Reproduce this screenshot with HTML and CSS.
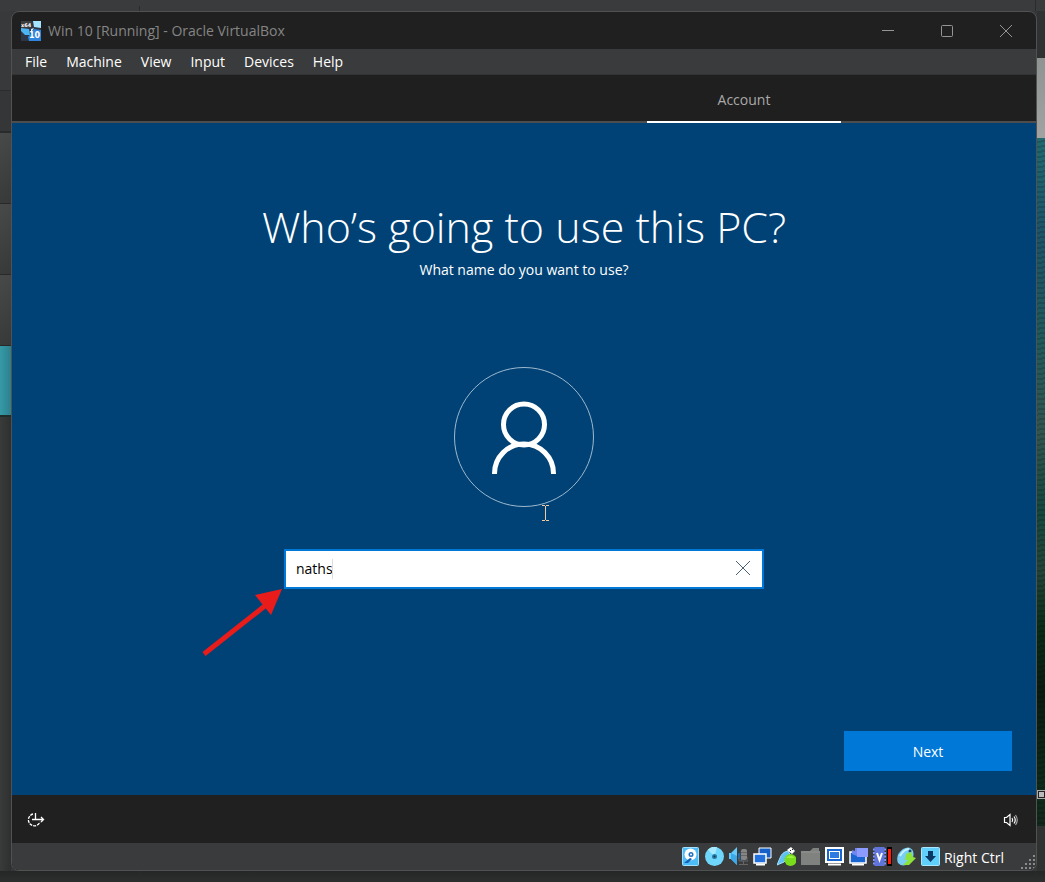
FILE: index.html
```html
<!DOCTYPE html>
<html lang="en">
<head>
<meta charset="utf-8">
<title>Win 10 [Running] - Oracle VirtualBox</title>
<link rel="stylesheet" href="styles.css">
</head>
<body class="desktop">
<div class="backdrop-edge backdrop-top"></div>
<div class="machine-list">
  <div class="machine-tools"></div>
  <div class="machine-header"></div>
  <div class="machine-row"></div>
  <div class="machine-row"></div>
  <div class="machine-row"></div>
  <div class="machine-row machine-selected"></div>
</div>
<main class="window">
  <header class="titlebar">
    <svg class="app-icon" viewBox="0 0 20 20" aria-hidden="true">
      <rect width="20" height="20" fill="#2d3548"/>
      <path d="M0 7L8 8L9 14L4 14L0 10Z" fill="#4db4f4"/>
      <path d="M12 0H20V7L13 6Z" fill="#a5e4ff"/>
      <path d="M13 8L20 9V20H8L7 16Z" fill="#2e86dc"/>
      <path d="M10 8L13 7L10 12Z" fill="#d9f4ff"/>
      <rect width="10" height="7" fill="#3d3d3d"/>
      <text x="0" y="6" class="app-icon-arch">x64</text>
      <text x="8" y="17" class="app-icon-version">10</text>
    </svg>
    <h1 class="window-title">Win 10 [Running] - Oracle VirtualBox</h1>
    <div class="window-controls">
      <button class="window-button" aria-label="Minimize"><svg width="12" height="12" viewBox="0 0 12 12"><path d="M0 5.5H12"/></svg></button>
      <button class="window-button" aria-label="Maximize"><svg width="12" height="12" viewBox="0 0 12 12"><rect x=".5" y=".5" width="11" height="11" rx="1"/></svg></button>
      <button class="window-button" aria-label="Close"><svg width="12" height="12" viewBox="0 0 12 12"><path d="M0 0L12 12M12 0L0 12"/></svg></button>
    </div>
  </header>
  <nav class="menubar">
    <button class="menu">File</button>
    <button class="menu">Machine</button>
    <button class="menu">View</button>
    <button class="menu">Input</button>
    <button class="menu">Devices</button>
    <button class="menu">Help</button>
  </nav>
  <div class="steps"><div class="step">Account</div></div>
  <form class="setup">
    <h2 class="question">Who’s going to use this PC?</h2>
    <label class="prompt" for="name">What name do you want to use?</label>
    <div class="avatar">
      <svg width="140" height="140" viewBox="0 0 140 140" fill="none" stroke="#fff" aria-hidden="true">
        <circle cx="70" cy="70" r="69.5" stroke="#9db9cf"/>
        <circle cx="70" cy="57.5" r="20.5" stroke-width="5"/>
        <path d="M40.500 107V106.500A29.500 29.500 0 0 1 99.500 106.500V107" stroke-width="5"/>
      </svg>
      <svg class="pointer" width="7" height="16" viewBox="0 0 7 16" fill="none" stroke="#f5c9a0" aria-hidden="true"><path d="M0 .5H3M4 .5H7M3.500 1V15M0 15.500H3M4 15.500H7"/></svg>
    </div>
    <div class="field">
      <input class="field-input" id="name" type="text" value="naths">
      <span class="caret"></span>
      <button class="field-clear" type="button" aria-label="Clear"><svg width="14" height="14" viewBox="0 0 14 14"><path d="M0 0L14 14M14 0L0 14"/></svg></button>
      <svg class="callout" width="84" height="72" viewBox="0 0 84 72" aria-hidden="true"><path d="M2 67L64 18" stroke="#e91c1c" stroke-width="5"/><path d="M80 2L53 8L69 28Z" fill="#e91c1c"/></svg>
    </div>
    <button class="next" type="button">Next</button>
  </form>
  <div class="guest-bar">
    <button class="guest-button" aria-label="Ease of access"><svg width="18" height="16" viewBox="0 0 18 16" fill="none" stroke="#fff" stroke-width="1.300"><path d="M6 2A6 6 0 1 0 13 10" stroke-dasharray="3 1"/><path d="M8.500 1V8M5 7.500H16M14 5L16.500 7.500L14 10"/></svg></button>
    <button class="guest-button" aria-label="Volume"><svg width="16" height="14" viewBox="0 0 16 14" fill="none" stroke="#fff" stroke-width="1.200"><path d="M1.500 4.500H3.500L7 1.500V12.500L3.500 9.500H1.500ZM9 5Q10.500 7 9 9M11 3.500Q13.500 7 11 10.500"/><path d="M12.500 2Q16 7 12.500 12" opacity=".6"/></svg></button>
  </div>
  <footer class="statusbar">
    <div class="indicators">
      <svg class="indicator" viewBox="0 0 19 19"><rect x="1.500" y=".5" width="16" height="18" rx="1" fill="#4ebcf6" stroke="#9fe0ff"/><circle cx="9.500" cy="7.500" r="6" fill="#fff"/><circle cx="10" cy="7.500" r="2.500" fill="#1f6fbf"/><circle cx="10" cy="7.500" r="1" fill="#fff"/><path d="M3 16L9 11L11 12L7 16Z" fill="#1260b8"/></svg>
      <svg class="indicator" viewBox="0 0 19 19"><circle cx="9.500" cy="9.500" r="9.500" fill="#70d7fc"/><path d="M9.500 9.500L3 2.500A9.500 9.500 0 0 1 12 0Z" fill="#a6e9ff"/><circle cx="9.500" cy="9.500" r="2.500" fill="#267ca9"/><circle cx="9.500" cy="9.500" r="1" fill="#263a45"/></svg>
      <svg class="indicator" viewBox="0 0 19 19"><path d="M0 6H2L8 0V18L2 12H0Z" fill="#65c9fa"/><path d="M2 6V12L8 18V9Z" fill="#3da8e8"/><path d="M10 6V12M12.500 4V14" stroke="#2774b8" stroke-width="1.500"/><rect x="12" y="2" width="6" height="11" rx="2" fill="#858585"/><path d="M10 10V14H19V10M14.500 14V18M10 17.500H19M12 5.500H18M12 8.500H18" stroke="#666" fill="none"/></svg>
      <svg class="indicator" viewBox="0 0 19 19"><path d="M6 1H18V11H6Z" fill="#1560c8" stroke="#fff"/><path d="M1 7H13V16H1Z" fill="#2270dc" stroke="#fff" stroke-width="1.500"/><path d="M3 17.500H12" stroke="#fff" stroke-width="2"/></svg>
      <svg class="indicator" viewBox="0 0 19 19"><path d="M0 18L3 11Q5 5 11 4L14 9L7 15Z" fill="#61c2f2" stroke="#9ce2ff"/><path d="M10 3L14 0L18 4L15 7Z" fill="#fff"/><path d="M13 3L14 4M15 2L16 3" stroke="#222"/><circle cx="13.500" cy="13" r="6" fill="#79dc1c"/><path d="M9 11Q13 6 18 11Z" fill="#9cf13f"/></svg>
      <svg class="indicator" viewBox="0 0 19 19"><path d="M0 4H9L12 1H18V4H19V18H0Z" fill="#808280"/><path d="M0 5H19" stroke="#919391"/></svg>
      <svg class="indicator" viewBox="0 0 19 19"><rect x="1" y="1" width="17" height="14" fill="#1767cf" stroke="#fff" stroke-width="2"/><rect x="4.500" y="4.500" width="10" height="7" fill="#2d7be1" stroke="#fff"/><path d="M3 17.500H16" stroke="#fff" stroke-width="2"/></svg>
      <svg class="indicator" viewBox="0 0 19 19"><path d="M1 5H17V16H1Z" fill="#1965d2" stroke="#fff" stroke-width="1.500"/><path d="M3 17.500H15" stroke="#fff" stroke-width="2"/><rect x="8" y="1" width="11" height="9" fill="#8b9bff"/><path d="M3 3L6 4V1H8V9L3 7Z" fill="#7186ef"/></svg>
      <svg class="indicator" viewBox="0 0 19 19"><path d="M0 2.500H13M0 6H13M0 9.500H13M0 13H13M0 16.500H13" stroke="#8497ff" stroke-width="2"/><rect x="1.500" y="0" width="10" height="19" fill="#6075db"/><path d="M4 6L6.500 13L9 6" stroke="#fff" stroke-width="2" fill="none"/><rect x="14" width="5" height="19" fill="#050505"/><rect x="15" y="2" width="3" height="15" fill="#ff1a0a"/></svg>
      <svg class="indicator" viewBox="0 0 19 19"><path d="M1 16Q-2 8 6 2Q13-2 16 4Q18 11 12 16Q6 21 1 16Z" fill="#78cef5"/><path d="M3 9Q7 2 12 2" stroke="#c4f1ff" stroke-width="2" fill="none"/><circle cx="13" cy="4" r="1.500" fill="#26455b"/><path d="M9 7L14 5L16 10L19 11L12 18H6L11 13H8Z" fill="#8de23b"/></svg>
      <svg class="indicator" viewBox="0 0 19 19"><rect x=".5" y=".5" width="18" height="18" rx="1" fill="#61cffc" stroke="#a7e8ff"/><path d="M7 4H12V9H15L9.500 15L4 9H7Z" fill="#0b3764"/></svg>
    </div>
    <span class="host-key">Right Ctrl</span>
    <svg class="grip" width="15" height="15" viewBox="0 0 15 15" fill="#898b8c" aria-hidden="true"><path d="M12 0h2v2h-2zM12 4h2v2h-2zM8 4h2v2H8zM12 8h2v2h-2zM8 8h2v2H8zM4 8h2v2H4zM12 12h2v2h-2zM8 12h2v2H8zM4 12h2v2H4zM0 12h2v2H0z"/></svg>
  </footer>
</main>
<div class="wallpaper"><span class="handle"></span></div>
<div class="backdrop-edge backdrop-bottom"></div>
</body>
</html>
```

FILE: styles.css
```css
* { box-sizing: border-box; }

body.desktop {
  margin: 0;
  min-height: 100vh;
  display: grid;
  grid-template-columns: 11px 1fr 8px;
  grid-template-rows: 11px 1fr 11px;
  background: #363738;
  color: #fff;
  font: 14px/20px "Open Sans", "Noto Sans", sans-serif;
}

button {
  margin: 0;
  padding: 0;
  border: 0;
  background: none;
  color: inherit;
  font: inherit;
}

svg { display: block; flex: none; }

.backdrop-edge {
  grid-column: 1 / -1;
  display: flex;
  justify-content: space-between;
  padding: 0 9px 0 139px;
}
.backdrop-edge::before, .backdrop-edge::after { content: ""; width: 1px; background: #2a2b2b; }
.backdrop-top { background: #3a3b3c; }
.backdrop-top::before { margin-top: 6px; }
.backdrop-bottom { background: linear-gradient(#252727, #2d2e2e); }

.machine-list { background: linear-gradient(90deg, #393b3b, #2e3030); }
.machine-tools { height: 80px; background: #38393b; border-bottom: 1px solid #2b2c2d; }
.machine-header { height: 42px; background: #343638; border-bottom: 2px solid #292a2a; }
.machine-row { height: 71px; background: linear-gradient(135deg, #484949, #373838); border-bottom: 1px solid #292929; }
.machine-selected { background: linear-gradient(90deg, #369aa7, #2c808c); border-bottom: 2px solid #202b2c; }

.window {
  display: flex;
  flex-direction: column;
  border: 1px solid #505152;
  border-radius: 8px;
  overflow: hidden;
  background: #202020;
}

.titlebar { height: 37px; display: flex; align-items: center; padding: 0 1px 0 9px; gap: 7px; color: #858585; }
.app-icon { width: 20px; height: 20px; }
.app-icon-arch { font: bold 5px "DejaVu Sans", sans-serif; fill: #fff; }
.app-icon-version { font: bold 8px "DejaVu Sans", sans-serif; fill: #fff; }
.window-title { flex: 1; margin: 0; font-size: 14px; font-weight: 400; }
.window-controls { display: flex; align-self: stretch; }
.window-button { width: 59px; display: grid; place-items: center; }
.window-button svg { fill: none; stroke: #959595; }

.menubar { height: 26px; display: flex; align-items: center; gap: 19px; padding: 1px 13px 0; background: #3a3b3c; border-bottom: 1px solid #323334; }

.steps { height: 48px; display: flex; justify-content: flex-end; padding-right: 19%; background: linear-gradient(#4d4d4d, #4d4d4d) bottom / 100% 2px no-repeat #1f1f1f; }
.step { width: 23.500%; display: grid; place-items: center; padding-top: 4px; border-bottom: 2px solid #fff; color: #a9a9a9; }

.setup { flex: 1; display: flex; flex-direction: column; align-items: center; padding: 74px 24px 24px; background: #004275; }
.question { margin: 0; font-size: 43px; line-height: 60px; font-weight: 300; }
.prompt { margin-top: 3px; }
.avatar { position: relative; margin-top: 87px; }
.pointer { position: absolute; left: 88px; top: 138px; }

.field { position: relative; width: 480px; max-width: 100%; height: 40px; margin-top: 42px; display: flex; background: #fff; border: 2px solid #0078d7; color: #000; }
.field-input { flex: 1; min-width: 0; padding: 0 10px; border: 0; outline: 0; background: none; color: inherit; font: inherit; }
.caret { position: absolute; left: 46px; top: 8px; width: 1px; height: 20px; background: #ddd; }
.field-clear { width: 38px; padding-bottom: 3px; display: grid; place-items: center; }
.field-clear svg { fill: none; stroke: #4b6070; }
.callout { position: absolute; right: 100%; top: 100%; }

.next { width: 168px; height: 40px; padding-top: 1px; margin-top: auto; align-self: flex-end; background: #0078d7; }

.guest-bar { height: 48px; display: flex; align-items: center; justify-content: space-between; padding: 2px 17px 0 15px; }
.statusbar { height: 27px; display: flex; align-items: center; justify-content: flex-end; background: #3a3b3c; }
.indicators { display: flex; gap: 5px; }
.indicator { width: 19px; height: 19px; }
.host-key { margin: 0 17px 0 4px; padding-top: 2px; }
.grip { align-self: flex-end; }

.wallpaper {
  position: relative;
  background:
    repeating-linear-gradient(172deg, transparent 0 3px, rgba(0, 0, 0, .15) 3px 5px) 0 127px / 100% 688px no-repeat,
    linear-gradient(#303132 0 47px, #8f9391 47px, #a0a3a1 127px, #206a70 127px, #1c5469 220px, #205a5c 330px, #315550 420px, #14483f 500px, #234438 560px, #082b16 620px, #0a1b10 680px, #0d2b1a 780px, #12281c 815px, #303131 815px);
}
.handle { position: absolute; left: 0; top: 779px; width: 9px; height: 9px; background: #bbb; border: 2px solid #222; outline: 1px solid #aaa; outline-offset: -1px; }
```
